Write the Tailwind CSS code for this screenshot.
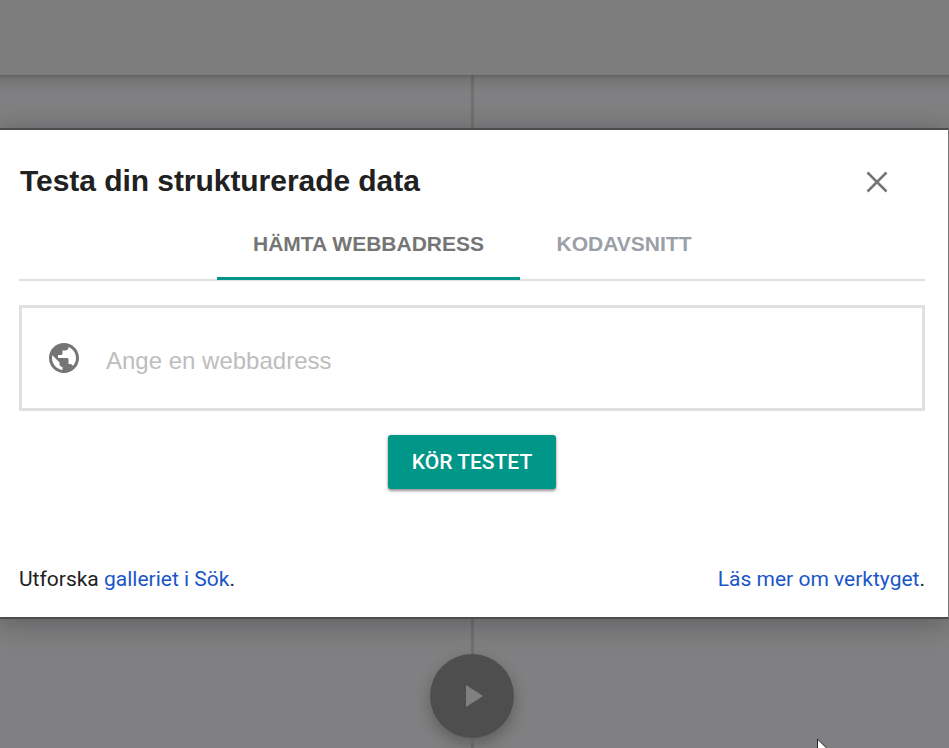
<!DOCTYPE html>
<html lang="sv">
<head>
<meta charset="utf-8">
<title>Testa din strukturerade data</title>
<script src="https://cdn.jsdelivr.net/npm/@tailwindcss/browser@4"></script>
</head>
<body class="relative h-[748px] w-[949px] overflow-hidden bg-[#808082] font-['Roboto',sans-serif]">
  <div class="-mx-5 flex h-full flex-col items-center">
    <header class="relative z-10 h-[75px] w-full shrink-0 bg-[#7d7d7d] shadow-[0_1px_2px_rgba(0,0,0,0.12),0_4px_14px_rgba(0,0,0,0.22)]"></header>
    <div class="-ml-[4px] h-[579px] w-[3px] shrink-0 bg-[#717171]"></div>
    <div class="-ml-[5px] flex size-[84px] shrink-0 items-center justify-center rounded-full bg-[#4e4e4e] shadow-[0_6px_16px_rgba(0,0,0,0.28)]">
      <svg class="ml-1 h-[22px] w-[17px]" viewBox="0 0 17 22" fill="#808082"><path d="M0 0v22l17-11z"/></svg>
    </div>
    <div class="-ml-[4px] h-[10px] w-[3px] shrink-0 bg-[#656565]"></div>
  </div>

  <main role="dialog" class="absolute -left-1 top-[128px] z-20 flex h-[491px] w-[953px] flex-col border-y-2 border-r border-y-[#4d4d4d] border-r-[#757575] bg-white pl-[23px] pr-[23px] shadow-[0_4px_28px_rgba(0,0,0,0.28)]">
    <div class="flex h-[78px] shrink-0 items-end justify-between pr-[37px]">
      <h1 class="mb-1.5 whitespace-nowrap pl-px font-['Liberation_Sans',sans-serif] text-[30px] leading-[42px] font-bold tracking-[-0.05px] text-[#212121]">Testa din strukturerade data</h1>
      <button aria-label="Stäng" class="mb-[15px]"><svg class="size-[22px]" viewBox="0 0 22 22" fill="none" stroke="#757575" stroke-width="2.5"><path d="M1.5 1.5l19 19M20.5 1.5l-19 19"/></svg></button>
    </div>
    <div class="flex h-[73px] w-[906px] shrink-0 border-b-2 border-[#e0e0e0] pl-[198px] font-['Liberation_Sans',sans-serif] text-[21px] font-bold">
      <div class="flex h-[72px] w-[303px] justify-center border-b-3 border-[#009688] pt-[21px] leading-[30px] whitespace-nowrap text-[#757575]">HÄMTA WEBBADRESS</div>
      <div class="w-[208px] pt-[21px] text-center leading-[30px] text-[#9aa0a6]">KODAVSNITT</div>
    </div>
    <div class="mt-6 flex h-[106px] w-[906px] shrink-0 items-center border-3 border-[#e0e0e0] pl-6">
      <svg class="size-9 shrink-0" viewBox="0 0 24 24" fill="#757575"><path d="M12 2C6.480 2 2 6.480 2 12s4.480 10 10 10 10-4.480 10-10S17.520 2 12 2zm-1 17.930c-3.950-.49-7-3.850-7-7.930 0-.62.08-1.210.21-1.790L9 15v1c0 1.100.9 2 2 2v1.930zm6.900-2.540c-.26-.81-1-1.390-1.900-1.390h-1v-3c0-.55-.45-1-1-1H8v-2h2c.55 0 1-.45 1-1V7h2c1.100 0 2-.9 2-2v-.41c2.930 1.190 5 4.060 5 7.410 0 2.080-.8 3.970-2.100 5.390z"/></svg>
      <span class="mt-1.5 ml-6 font-['Liberation_Sans',sans-serif] text-[24px] leading-8 text-[#bdbdbd]">Ange en webbadress</span>
    </div>
    <button class="mt-6 ml-[369px] h-[54px] w-[168px] shrink-0 rounded-[3px] bg-[#009688] pt-0.5 text-[21px] font-medium text-white shadow-[0_2px_3px_rgba(0,0,0,0.4),0_0_3px_rgba(0,0,0,0.12)]">KÖR TESTET</button>
    <footer class="mt-[75px] flex w-[906px] justify-between text-[21px] leading-[30px] text-[#212121]">
      <p>Utforska <a class="text-[#1a56c8]">galleriet i Sök</a>.</p>
      <p><a class="text-[#1a56c8]">Läs mer om verktyget</a>.</p>
    </footer>
  </main>

  <svg class="absolute top-[738px] left-[817px] z-30 h-[30px] w-[20px]" viewBox="0 0 20 30" fill="white" stroke="#222" stroke-width="1"><path d="M.5 1v19l4.500-4 3 7 3-1.500-3-7h6z"/></svg>
</body>
</html>
